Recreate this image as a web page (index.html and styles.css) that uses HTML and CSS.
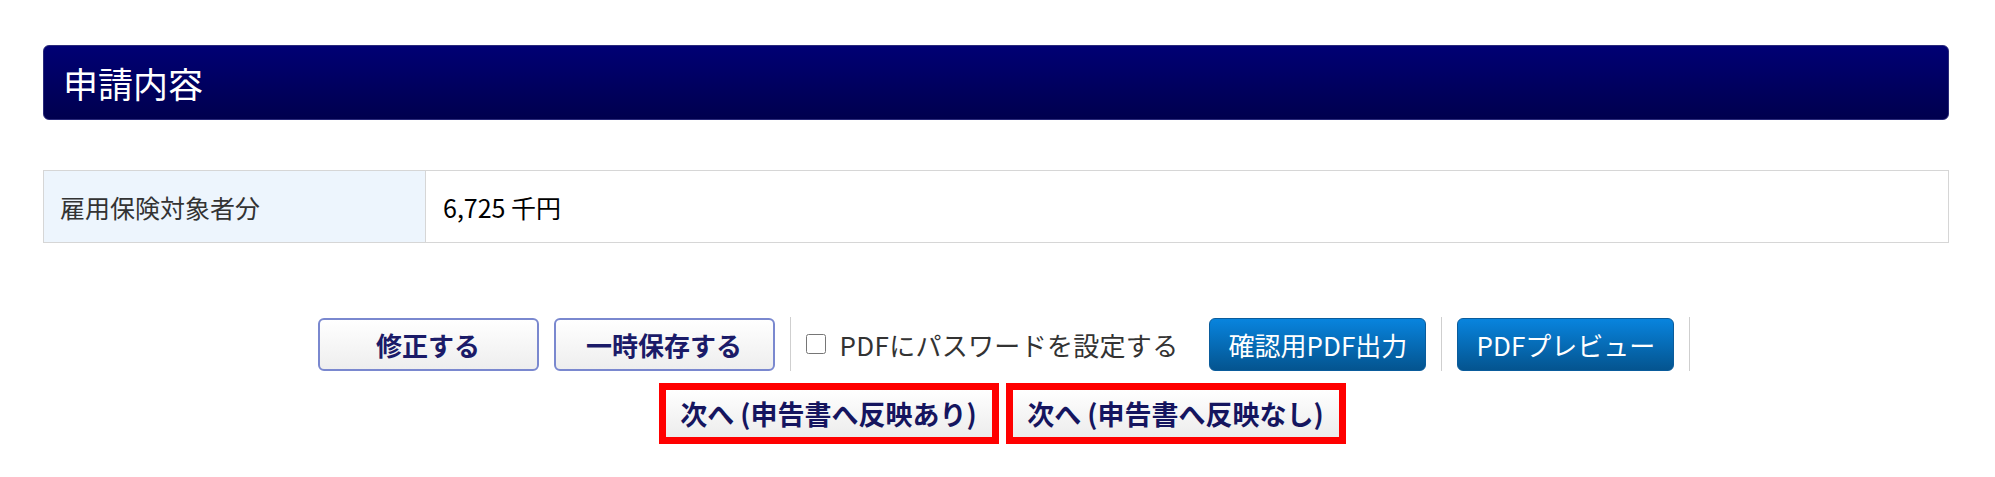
FILE: index.html
```html
<!DOCTYPE html>
<html>
<head>
  <meta charset="utf-8">
  <title>申請内容</title>
  <link rel="stylesheet" href="styles.css">
</head>
<body>
  <div class="page">
    <h2 class="sec-title">申請内容</h2>
    <table class="info">
      <tr>
        <th>雇用保険対象者分</th>
        <td>6,725 千円</td>
      </tr>
    </table>
    <div class="actions">
      <ul class="btn-row">
        <li><button class="btn-light">修正する</button></li>
        <li><button class="btn-light">一時保存する</button></li>
        <li class="sep"></li>
        <li class="chk"><label><input type="checkbox"><span>PDFにパスワードを設定する</span></label></li>
        <li><button class="btn-blue">確認用PDF出力</button></li>
        <li class="sep"></li>
        <li><button class="btn-blue">PDFプレビュー</button></li>
        <li class="sep"></li>
      </ul>
      <ul class="btn-row next-row">
        <li><button class="btn-next">次へ (申告書へ反映あり)</button></li>
        <li><button class="btn-next">次へ (申告書へ反映なし)</button></li>
      </ul>
    </div>
  </div>
</body>
</html>
```

FILE: styles.css
```css
body{
  margin:0;
  background:#fff;
  font-family:"Noto Sans CJK JP","Noto Sans",sans-serif;
  color:#222;
}
.page{
  padding:45px 46px 0 43px;
}
.sec-title{
  margin:0;
  height:75px;
  box-sizing:border-box;
  display:flex;
  align-items:center;
  padding-left:19px;
  font-size:35px;
  font-weight:normal;
  color:#fff;
  background:linear-gradient(#000074,#00004e);
  border:1px solid #2a2a7a;
  border-radius:6px;
}
.info{
  width:100%;
  margin-top:50px;
  border-collapse:collapse;
}
.info th,.info td{
  height:69px;
  border:1px solid #d6d6d6;
  font-size:25px;
  font-weight:normal;
  text-align:left;
}
.info th{
  width:364px;
  padding-left:16px;
  background:#edf5fd;
  color:#333;
}
.info td{
  padding-left:17px;
  color:#000;
}
.actions{
  margin-top:74px;
}
.btn-row{
  display:flex;
  justify-content:center;
  align-items:center;
  gap:15px;
  margin:0;
  padding:0 0 0 16px;
  list-style:none;
}
.btn-row button{
  font-family:inherit;
  font-size:26px;
  cursor:pointer;
  box-sizing:border-box;
  padding:0;
}
.sep{
  width:1px;
  height:54px;
  background:#cfcfcf;
}
.btn-light{
  width:221px;
  height:53px;
  border:2px solid #7a88cf;
  border-radius:6px;
  background:linear-gradient(#fff,#eeeeee);
  color:#1b1b68;
  font-weight:bold;
}
.btn-blue{
  width:217px;
  height:53px;
  border:1px solid #0a5c9c;
  border-radius:6px;
  background:linear-gradient(#0884de,#04548f);
  color:#fff;
  font-weight:normal;
}
.chk{
  margin-right:16px;
}
.chk label{
  display:flex;
  align-items:center;
  gap:14px;
  font-size:26px;
  letter-spacing:0.3px;
  color:#333;
}
.chk input{
  width:20px;
  height:20px;
  margin:0;
}
.next-row{
  margin-top:12px;
  gap:7px;
  padding-left:12px;
}
.btn-row .btn-next{
  width:340px;
  height:61px;
  border:7px solid #ff0000;
  background:linear-gradient(#fff,#ececec);
  color:#15155f;
  font-size:27px;
  font-weight:bold;
}
```
